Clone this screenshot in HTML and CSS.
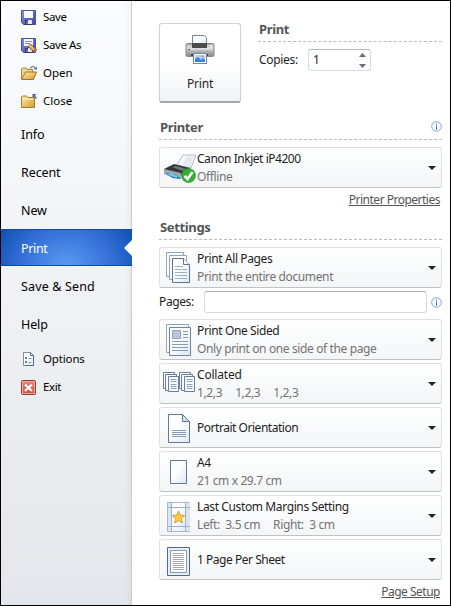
FILE: index.html
```html
<!DOCTYPE html>
<html lang="en">
<head>
<meta charset="utf-8">
<title>Print</title>
<link rel="stylesheet" href="styles.css">
</head>
<body>
<svg class="defs" width="0" height="0" aria-hidden="true">
  <defs>
    <linearGradient id="page" x1="0" y1="0" x2="1" y2="1"><stop offset=".4" stop-color="#fff"/><stop offset="1" stop-color="#dce6f2"/></linearGradient>
    <linearGradient id="folder" x1="0" y1="0" x2="1" y2="1"><stop offset="0" stop-color="#fff0a8"/><stop offset="1" stop-color="#d9982c"/></linearGradient>
    <linearGradient id="disk" x1="0" y1="0" x2="1" y2="1"><stop offset="0" stop-color="#8b8ee4"/><stop offset="1" stop-color="#4146a8"/></linearGradient>
    <linearGradient id="metal" x1="0" y1="0" x2="0" y2="1"><stop offset="0" stop-color="#999"/><stop offset=".25" stop-color="#ddd"/><stop offset=".6" stop-color="#b4b4b4"/><stop offset="1" stop-color="#888"/></linearGradient>
    <linearGradient id="red" x1="0" y1="0" x2="0" y2="1"><stop offset="0" stop-color="#e58a7c"/><stop offset="1" stop-color="#c94a38"/></linearGradient>
    <symbol id="info" viewBox="0 0 11 11"><circle cx="5.5" cy="5.5" r="4.8" fill="#fafdff" stroke="#7ba5dc"/><path d="M5 2.5h1v1.2H5zM5 4.7h1v4H5z" fill="#3c6fb8"/></symbol>
    <symbol id="floppy" viewBox="0 0 15 15"><path d="M.5.5h14v14h-12l-2-2z" fill="url(#disk)" stroke="#4b4fa6"/><path d="M3 1h9v7H3z" fill="#f6f8ff"/><path d="M4 10h7v5H4z" fill="#333a5c"/><path d="M7 10h4v4H7z" fill="#dfe6f2"/><path d="M5 11h2v3H5z" fill="#6a7396"/></symbol>
  </defs>
</svg>
<div class="window">
  <nav class="sidebar">
    <a class="cmd tight"><svg width="15" height="15"><use href="#floppy"/></svg><span>Save</span></a>
    <a class="cmd tight"><svg width="16" height="15"><use href="#floppy" width="15" height="15"/><path d="M3 2h9v6H3z" fill="#f6f8ff"/><path d="M4 3.500h7M4 5.500h5" stroke="#8a94b8"/><path d="M8 7l6.500 6" stroke="#7a4a22" stroke-width="4"/><path d="M7.500 6.500l5.500 5" stroke="#e9bd75" stroke-width="2.400"/><path d="M13 11.500l2 2" stroke="#c76a60" stroke-width="3"/></svg><span>Save As</span></a>
    <a class="cmd"><svg width="17" height="16"><path d="M.5 14V4l1-1h4l1 1.500h5V7" fill="#f2d584" stroke="#a98645"/><path d="M.7 14.500L4.500 7H15.500l-3 7.500z" fill="url(#folder)" stroke="#9c732f"/><path d="M9 3.500q3-4 5.500 0" fill="none" stroke="#8296b4" stroke-width="1.300"/><path d="M12.500 4.500h3.500V1.500z" fill="#506b94"/></svg><span>Open</span></a>
    <a class="cmd"><svg width="17" height="16"><path d="M.5 14.500V4l1-1h4l1.500 1.500h6.500v10z" fill="url(#folder)" stroke="#a07a38"/><path d="M2 6h10" stroke="#fff4c2"/><path d="M11.500 5V1h4z" fill="#4b668f"/><path d="M13 2.500l2.500 3" stroke="#4b668f" stroke-width="1.300"/></svg><span>Close</span></a>
    <a class="tab">Info</a>
    <a class="tab">Recent</a>
    <a class="tab">New</a>
    <a class="tab active">Print</a>
    <a class="tab t-send">Save &amp; Send</a>
    <a class="tab last">Help</a>
    <a class="cmd"><svg width="15" height="15"><path d="M2.500.5h7l3 3v10h-10z" fill="url(#page)" stroke="#7d8fac"/><path d="M9.500.5v3h3v10h-8" fill="none" stroke="#53698d"/><path d="M4 5h2v2H4zM4 9h2v2H4z" fill="#657a9f"/><path d="M7.500 6.500h3M7.500 10.500h3" stroke="#8798b5"/></svg><span class="t-options">Options</span></a>
    <a class="cmd tight"><svg width="15" height="15"><rect x=".5" y=".5" width="14" height="14" rx="1" fill="url(#red)" stroke="#8f3b34"/><rect x="1.500" y="1.500" width="12" height="12" fill="none" stroke="#eeaaa0"/><path d="M4 4.500l7 6.500M11 4.500L4 11" stroke="#fff" stroke-width="2.300"/></svg><span>Exit</span></a>
  </nav>

  <main class="panel">
    <section class="top">
      <button class="print">
        <svg width="30" height="32" viewBox="0 0 30 32"><path d="M7.500 10V1.500h12l2 2V10" fill="url(#page)" stroke="#6f89ad"/><rect x="1" y="9.500" width="28" height="13" rx="1.500" fill="url(#metal)" stroke="#888"/><path d="M7 9h15v5H7z" fill="#4b4b4b"/><path d="M2 15h26" stroke="#eee"/><path d="M25 11v4M27 11v4" stroke="#fff" stroke-dasharray="1 1"/><path d="M3 15.500h2" stroke="#555"/><path d="M6 20h17v2H6z" fill="#444"/><rect x="8.500" y="19.500" width="13" height="10" fill="#f7fbff" stroke="#6d87aa"/><path d="M10 21h10v7H10z" fill="#aed2fa"/><path d="M10 28v-3l3-2 3 3 2-2 2 2v2z" fill="#3a83dc"/><circle cx="17.500" cy="22.500" r="1" fill="#f47350"/></svg>
        <span>Print</span>
      </button>
      <div class="copies">
        <h2>Print</h2>
        <div class="copy-row"><span>Copies:</span><div class="spin"><span>1</span><svg width="7" height="15"><path d="M0 4L3.500 0 7 4zM0 11L3.500 15 7 11z" fill="#666b78"/></svg></div></div>
      </div>
    </section>

    <h2 class="head-printer">Printer<svg width="11" height="11"><use href="#info"/></svg></h2>
    <div class="combo"><svg class="pic" width="34" height="31" viewBox="0 0 34 31"><path d="M15 13L21 3h13l-5 13z" fill="#f7f9fb" stroke="#b6bcc4"/><path d="M20 14l5-10 7 1-4 10z" fill="#e4eaf0"/><path d="M2 17l10-5 16 4-6 7-14 1z" fill="#33363b"/><path d="M10 15l4-1 10 3-3 2z" fill="#71777e"/><path d="M2 17l17 4v6l-8-1-9-4z" fill="#9da4ac"/><path d="M4 21l10 2 5 4-8-1z" fill="#1876ad"/><path d="M7 22l8 3" stroke="#68d2f3" stroke-width="2"/><circle cx="26.500" cy="23.500" r="7" fill="#38aa36" stroke="#218c2a" stroke-width=".6"/><path d="M22.500 24l3 3 5-7" fill="none" stroke="#fff" stroke-width="2.600"/></svg><p><b class="tighter">Canon Inkjet iP4200</b><i>Offline</i></p></div>
    <a class="link link-printer">Printer Properties</a>

    <h2 class="head-settings">Settings</h2>
    <div class="combo"><svg class="pic" width="34" height="34" viewBox="0 0 34 34"><g fill="url(#page)" stroke="#8fa4c2"><path d="M4.500 1.500h17v24h-17z"/><path d="M7.500 4.500h17v24h-17z"/><path d="M10.500 7.500h11l6 6v18h-17z" stroke="#5a7396"/><path d="M21.500 7.500v6h6" stroke="#5a7396"/></g><path d="M13 15.500h8M13 18.500h12M13 21.500h12M13 24.500h12M13 27.500h12" stroke="#a0afc6"/></svg><p><b>Print All Pages</b><i>Print the entire document</i></p></div>
    <div class="pages"><span>Pages:</span><div class="field"></div><svg width="11" height="11"><use href="#info"/></svg></div>
    <div class="combo"><svg class="pic" width="34" height="34" viewBox="0 0 34 34"><g fill="url(#page)" stroke="#6d84a7"><path d="M4.500 1.500h22v28h-22z" stroke="#8fa4c2"/><path d="M7.500 4.500h21v28h-21z"/></g><path d="M10.500 7.500h8v8h-8z" fill="#b8c7dc" stroke="#8fa4c2"/><path d="M21 8.500h5M21 11.500h5M21 14.500h5M10 18.500h16M10 21.500h16M10 24.500h16M10 27.500h16" stroke="#8799b6"/></svg><p><b>Print One Sided</b><i>Only print on one side of the page</i></p></div>
    <div class="combo"><svg class="pic" width="34" height="34" viewBox="0 0 34 34"><g id="stack" fill="#f8faff" stroke="#687f9f"><path d="M1.500 5.500h11v16h-11z"/><path d="M3.500 7.500h11v16h-11z"/><path d="M6.500 9.500h10v15h-10z"/><path d="M8.500 12.500h6M8.500 14.500h6M8.500 17.500h6M8.500 19.500h6M8.500 21.500h6" stroke="#8b9fbe"/></g><use href="#stack" x="16"/></svg><p><b class="loose">Collated</b><i class="numbers"><span>1,2,3</span><span>1,2,3</span><span>1,2,3</span></i></p></div>
    <div class="combo"><svg class="pic" width="34" height="34" viewBox="0 0 34 34"><path d="M6.500 3.500h14l7 7v21h-21z" fill="url(#page)" stroke="#617897"/><path d="M20.500 3.500v7h7z" fill="#d3dfee" stroke="#617897"/><path d="M10 19.500h14M10 21.500h14M10 23.500h14M10 25.500h14" stroke="#879dc0"/></svg><p><b class="tighter">Portrait Orientation</b></p></div>
    <div class="combo"><svg class="pic" width="34" height="34" viewBox="0 0 34 34"><path d="M8.500 5.500h16v23h-16z" fill="url(#page)" stroke="#617897"/></svg><p><b>A4</b><i>21 cm x 29.7 cm</i></p></div>
    <div class="combo"><svg class="pic" width="34" height="34" viewBox="0 0 34 34"><path d="M5.500 3.500h22v29h-22z" fill="url(#page)" stroke="#a7b8cf"/><path d="M6 4h4v28H6zM24 4h4v28h-4z" fill="#dce5f0"/><path d="M9.500 3v30M23.500 3v30M5 8.500h23M5 27.500h23" stroke="#9ab0d0"/><path d="M16.500 12l1.800 4.100 4.500.4-3.400 3 1 4.500-3.900-2.400-3.900 2.400 1-4.500-3.400-3 4.500-.4z" fill="#ffcb45" stroke="#db9c35"/></svg><p><b>Last Custom Margins Setting</b><i class="margins"><span>Left:&nbsp; 3.5 cm</span><span>Right:&nbsp; 3 cm</span></i></p></div>
    <div class="combo"><svg class="pic" width="34" height="34" viewBox="0 0 34 34"><path d="M5.500 4.500h22v28h-22z" fill="#e7eef7" stroke="#51698c"/><path d="M8.500 7.500h16v22h-16z" fill="#fff" stroke="#8499b7"/><path d="M11 10.500h11M11 12.500h11M11 14.500h11M11 16.500h11M11 18.500h11M11 20.500h11M11 22.500h11M11 24.500h11M11 26.500h11" stroke="#a5a9b0"/></svg><p><b class="tighter">1 Page Per Sheet</b></p></div>
    <a class="link">Page Setup</a>
  </main>
</div>
</body>
</html>
```
FILE: styles.css
```css
* { box-sizing: border-box; }
body { margin: 0; font: 12px/18px "Noto Sans", "Open Sans", sans-serif; color: #1e1e1e; }
.defs { display: block; position: absolute; }
.window { display: flex; width: 451px; height: 606px; border: 1px solid #000; background: #fff; }
h2, p { margin: 0; }
svg { flex: none; }
span, b, i, a { white-space: nowrap; }

.sidebar { width: 131px; padding-top: 2px; border-right: 1px solid #c9ccd0; background: linear-gradient(90deg, transparent 124px, rgba(0,0,0,.035)), linear-gradient(#fbfcfd, #eff1f4 50%, #e3e6ea); color: #000; }
.cmd { display: flex; align-items: center; gap: 7px; height: 28px; padding-left: 20px; font-size: 11.500px; }
.cmd svg { width: 15px; overflow: visible; }
.tight span { letter-spacing: -.4px; }
.t-options { letter-spacing: -.15px; }
.tab { display: flex; align-items: center; height: 38px; padding: 2px 0 0 20px; font-size: 12.500px; letter-spacing: -.1px; }
.t-send { letter-spacing: .15px; }
.tab.active { position: relative; height: 37px; margin: 0 -1px 1px 0; color: #fff; letter-spacing: -.35px; border: solid #0d4ba5; border-width: 1px 0; background: radial-gradient(ellipse 75px 60px at 50% 100%, #5a9af3, #3470d8 60%, #1353b7); }
.tab.active::after { content: ""; position: absolute; right: 0; top: 10px; border: solid transparent; border-width: 8px 8px 8px 0; border-right-color: #fff; }
.tab.last { margin-bottom: 2px; }

.panel { display: flex; flex-direction: column; width: 318px; padding: 22px 8px 0 27px; letter-spacing: -.38px; }
.top { display: flex; gap: 17px; height: 95px; }
.print { display: flex; flex-direction: column; align-items: center; width: 82px; height: 80px; padding: 10px 0 0; border: 1px solid #cfd1d4; border-bottom: 2px solid #a5a7aa; border-radius: 3px; background: linear-gradient(#fff 50%, #f1f3f4); font: inherit; letter-spacing: -.2px; color: inherit; }
.print span { margin-top: 9px; }
.copies { flex: 1; margin-top: -3px; }
h2 { display: flex; justify-content: space-between; align-items: center; height: 22px; padding: 0 0 4px 1px; border-bottom: 1px dashed #bbb; font-size: 13px; line-height: 18px; letter-spacing: -.35px; color: #555; }
.copy-row { display: flex; align-items: center; gap: 10px; height: 22px; margin-top: 7px; padding-left: 1px; }
.copy-row > span { width: 39px; letter-spacing: -.3px; }
.spin { display: flex; justify-content: space-between; align-items: center; width: 63px; height: 22px; padding: 0 4px; border: 1px solid #d6dae2; border-top-color: #b3b6bb; border-radius: 3px; }
.head-printer, .head-settings { flex: none; margin-bottom: 7px; }
.head-printer svg { margin-top: -1px; }
.combo { display: flex; flex: none; align-items: center; height: 41px; margin-bottom: 3px; padding: 0 5px 0 2px; border: 1px solid #dfe1e3; border-bottom-color: #bfc2c5; border-radius: 3px; background: linear-gradient(#fff, #f3f5f6); }
.combo::after { content: ""; margin-left: auto; border: solid transparent; border-width: 4px 4px 0; border-top-color: #222; }
.combo b, .combo i { display: block; font-weight: 400; font-style: normal; }
.combo i { color: #737373; }
.combo p { margin-left: 1px; }
.combo .tighter { letter-spacing: -.47px; }
.combo .loose { letter-spacing: -.2px; }
.link { align-self: flex-end; margin-right: 2px; text-decoration: underline; letter-spacing: -.5px; color: #555; }
.link-printer { height: 27px; }
.pages { display: flex; flex: none; align-items: center; height: 22px; margin-bottom: 6px; }
.pages > span { width: 45px; }
.field { width: 223px; height: 22px; margin-right: 4px; border: 1px solid #d6dae2; border-top-color: #aeb1b6; border-radius: 3px; }
.numbers span + span, .margins span + span { margin-left: 13px; }
```
